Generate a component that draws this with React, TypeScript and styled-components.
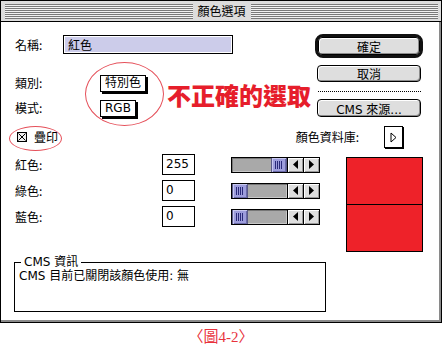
import React from "react";
import styled, { createGlobalStyle } from "styled-components";

const GlobalStyle = createGlobalStyle`
  html, body { margin: 0; padding: 0; background: #fff; }
  body {
    font-family: "DejaVu Sans", "Noto Sans CJK TC", sans-serif;
    font-size: 12px;
    color: #000;
  }
  * { box-sizing: border-box; }
`;

const Page = styled.div`
  width: 443px;
  display: flex;
  flex-direction: column;
`;

const Window = styled.div`
  position: relative;
  width: 442px;
  height: 323px;
  border: 1px solid #000;
  background: #fff;
  box-shadow: inset -2px -2px 0 #8a8a8a;
  display: flex;
  flex-direction: column;
`;

const TitleBar = styled.div`
  height: 21px;
  padding: 3px 3px 2px 4px;
  background: #dcdcdc;
  border-bottom: 1px solid #000;
  display: flex;
  align-items: stretch;
`;

const Stripes = styled.div`
  flex: 1;
  background: repeating-linear-gradient(
    to bottom,
    #7a7a7a 0px,
    #7a7a7a 1px,
    #f2f2f2 1px,
    #f2f2f2 2px
  );
`;

const TitleText = styled.div`
  padding: 0 5px;
  line-height: 14px;
  font-family: "Noto Sans CJK TC", sans-serif;
  font-size: 12px;
  background: #dcdcdc;
`;

const Body = styled.div`
  flex: 1;
  padding: 12px 0 0 14px;
  display: flex;
  flex-direction: column;
`;

const TopSection = styled.div`
  display: flex;
  align-items: flex-start;
`;

const LeftCol = styled.div`
  width: 300px;
  padding-top: 1px;
  display: flex;
  flex-direction: column;
`;

const RightCol = styled.div`
  width: 108px;
  display: flex;
  flex-direction: column;
  align-items: flex-start;
`;

const NameRow = styled.div`
  display: flex;
  align-items: center;
  height: 19px;
`;

const Label = styled.span<{ $w?: number }>`
  width: ${(p) => (p.$w ? `${p.$w}px` : "auto")};
  font-family: "Noto Sans CJK TC", sans-serif;
  font-size: 12px;
  line-height: 14px;
  white-space: nowrap;
`;

const NameInput = styled.div`
  width: 170px;
  height: 19px;
  border: 1px solid #000;
  box-shadow: inset 0 0 0 1px #fff;
  background: #ccccea;
  padding-left: 4px;
  font-family: "Noto Sans CJK TC", sans-serif;
  line-height: 17px;
`;

const ClassGrid = styled.div`
  margin-top: 20px;
  display: grid;
  grid-template-columns: 85px 67px auto;
  grid-template-rows: 18px 18px;
  row-gap: 7px;
  align-items: center;
`;

const PopButton = styled.div`
  justify-self: start;
  height: 17px;
  padding: 0 4px;
  border: 1px solid #000;
  background: #fff;
  box-shadow: 2px 2px 0 #000;
  line-height: 15px;
  font-family: "DejaVu Sans", "Noto Sans CJK TC", sans-serif;
  font-size: 12px;
`;

const Warning = styled.div`
  grid-column: 3;
  grid-row: 1 / span 2;
  align-self: center;
  margin-top: -2px;
  color: #e61e2b;
  font-family: "Noto Sans CJK TC", serif;
  font-weight: 900;
  font-size: 24px;
  line-height: 28px;
  white-space: nowrap;
`;

const DefaultRing = styled.div`
  width: 108px;
  height: 24px;
  border: 3px solid #111;
  border-radius: 8px;
  display: flex;
`;

const MacButton = styled.div<{ $h?: number; $w?: number }>`
  width: ${(p) => (p.$w ? `${p.$w}px` : "104px")};
  height: ${(p) => (p.$h ? `${p.$h}px` : "18px")};
  margin-left: ${(p) => (p.$w ? "0" : "2px")};
  border: 1px solid #000;
  border-radius: 4px;
  background: #dedede;
  box-shadow: inset 1px 1px 0 #fff, inset -1px -1px 0 #8c8c8c;
  display: flex;
  align-items: center;
  justify-content: center;
  font-family: "DejaVu Sans", "Noto Sans CJK TC", sans-serif;
  font-size: 12px;
`;

const Spaced = styled.div<{ $mt: number }>`
  margin-top: ${(p) => p.$mt}px;
`;

const DottedRule = styled.div`
  margin-top: 9px;
  margin-left: 3px;
  width: 103px;
  border-top: 1px dotted #000;
`;

const OptionsRow = styled.div`
  margin-top: 9px;
  width: 388px;
  height: 22px;
  display: flex;
  align-items: center;
  justify-content: space-between;
`;

const CheckWrap = styled.div`
  display: flex;
  align-items: center;
  gap: 7px;
  margin-left: 2px;
`;

const LibraryWrap = styled.div`
  display: flex;
  align-items: center;
  gap: 25px;
`;

const LibraryButton = styled.div`
  width: 19px;
  height: 22px;
  border: 1px solid #000;
  box-shadow: 1px 1px 0 #000;
  background: #fff;
  display: flex;
  align-items: center;
  justify-content: center;
`;

const RowsSection = styled.div`
  margin-top: 6px;
  display: flex;
  align-items: flex-start;
`;

const RowsGrid = styled.div`
  display: grid;
  grid-template-columns: 147px 69px 89px;
  grid-auto-rows: 21px;
  row-gap: 5px;
  align-items: center;
`;

const NumBox = styled.div`
  width: 33px;
  height: 21px;
  border: 1px solid #000;
  padding-left: 3px;
  line-height: 19px;
  font-size: 12px;
`;

const SliderBox = styled.div`
  width: 89px;
  height: 16px;
  border: 1px solid #000;
  display: flex;
`;

const Track = styled.div`
  flex: 1;
  position: relative;
  background: #a9a9a9;
  box-shadow: inset 1px 1px 0 #777, inset -1px -1px 0 #c8c8c8;
  display: flex;
`;

const Thumb = styled.div`
  width: 16px;
  height: 14px;
  background: #9d9ddc;
  border-left: 1px solid #5a5a8a;
  border-right: 1px solid #5a5a8a;
  box-shadow: inset 1px 1px 0 #c8c8f0, inset -1px -1px 0 #6a6aa8;
  display: flex;
  align-items: center;
  justify-content: center;
`;

const Grip = styled.div`
  width: 8px;
  height: 8px;
  background: repeating-linear-gradient(
    to right,
    #2a2a7a 0px,
    #2a2a7a 1px,
    transparent 1px,
    transparent 2px
  );
`;

const ArrowBtn = styled.div`
  width: 16px;
  height: 14px;
  border-left: 1px solid #000;
  background: #dedede;
  box-shadow: inset 1px 1px 0 #fff, inset -1px -1px 0 #999;
  display: flex;
  align-items: center;
  justify-content: center;
`;

const Swatch = styled.div`
  margin-left: 26px;
  margin-top: 3px;
  width: 77px;
  height: 95px;
  border: 1px solid #000;
  display: flex;
  flex-direction: column;
`;

const SwatchHalf = styled.div<{ $c: string }>`
  flex: 1;
  background: ${(p) => p.$c};
  & + & {
    border-top: 1px solid #000;
  }
`;

const GroupBox = styled.div`
  position: relative;
  margin-top: 10px;
  margin-left: -1px;
  width: 312px;
  height: 50px;
  border: 1px solid #000;
  padding: 6px 4px 3px;
  font-size: 12px;
  line-height: 14px;
`;

const Legend = styled.span`
  position: absolute;
  top: -8px;
  left: 6px;
  padding: 0 3px;
  background: #fff;
  line-height: 14px;
`;

const Ellipse = styled.div<{ $x: number; $y: number; $w: number; $h: number }>`
  position: absolute;
  left: ${(p) => p.$x}px;
  top: ${(p) => p.$y}px;
  width: ${(p) => p.$w}px;
  height: ${(p) => p.$h}px;
  border: 1px solid #e5505a;
  border-radius: 50%;
  pointer-events: none;
`;

const Caption = styled.div`
  width: 442px;
  margin-top: 6px;
  text-align: center;
  color: #e8323c;
  font-family: "Liberation Serif", "Noto Sans CJK TC", serif;
  font-size: 15px;
  line-height: 16px;
`;

const CheckIcon = () => (
  <svg width="10" height="10" viewBox="0 0 10 10">
    <rect x="0.5" y="0.5" width="9" height="9" fill="#eee" stroke="#000" />
    <path d="M1.5 1.5 L8.5 8.5 M8.5 1.5 L1.5 8.5" stroke="#000" strokeWidth="1" />
  </svg>
);

const TriangleRight = ({ outline }: { outline?: boolean }) => (
  <svg width="7" height="11" viewBox="0 0 7 11">
    <path
      d="M1 1 L6 5.5 L1 10 Z"
      fill={outline ? "#fff" : "#000"}
      stroke="#000"
      strokeWidth="1"
    />
  </svg>
);

const TriangleLeft = () => (
  <svg width="5" height="9" viewBox="0 0 5 9">
    <path d="M5 0 L0 4.5 L5 9 Z" fill="#000" />
  </svg>
);

const TriangleR = () => (
  <svg width="5" height="9" viewBox="0 0 5 9">
    <path d="M0 0 L5 4.5 L0 9 Z" fill="#000" />
  </svg>
);

const Slider = ({ value }: { value: number }) => {
  const travel = 55 - 16;
  const left = Math.round((value / 255) * travel);
  return (
    <SliderBox>
      <Track>
        <div style={{ width: left }} />
        <Thumb>
          <Grip />
        </Thumb>
      </Track>
      <ArrowBtn>
        <TriangleLeft />
      </ArrowBtn>
      <ArrowBtn>
        <TriangleR />
      </ArrowBtn>
    </SliderBox>
  );
};

const channels = [
  { label: "紅色:", value: 255 },
  { label: "綠色:", value: 0 },
  { label: "藍色:", value: 0 },
];

export default function App() {
  return (
    <Page>
      <GlobalStyle />
      <Window>
        <TitleBar>
          <Stripes />
          <TitleText>顏色選項</TitleText>
          <Stripes />
        </TitleBar>
        <Body>
          <TopSection>
            <LeftCol>
              <NameRow>
                <Label $w={48}>名稱:</Label>
                <NameInput>紅色</NameInput>
              </NameRow>
              <ClassGrid>
                <Label>類別:</Label>
                <PopButton>特別色</PopButton>
                <Warning>不正確的選取</Warning>
                <Label>模式:</Label>
                <PopButton>RGB</PopButton>
              </ClassGrid>
            </LeftCol>
            <RightCol>
              <DefaultRing>
                <MacButton $w={102} $h={18}>確定</MacButton>
              </DefaultRing>
              <Spaced $mt={7}>
                <MacButton $h={17}>取消</MacButton>
              </Spaced>
              <DottedRule />
              <Spaced $mt={7}>
                <MacButton $h={18}>CMS 來源...</MacButton>
              </Spaced>
            </RightCol>
          </TopSection>

          <OptionsRow>
            <CheckWrap>
              <CheckIcon />
              <Label>疊印</Label>
            </CheckWrap>
            <LibraryWrap>
              <Label>顏色資料庫:</Label>
              <LibraryButton>
                <TriangleRight outline />
              </LibraryButton>
            </LibraryWrap>
          </OptionsRow>

          <RowsSection>
            <RowsGrid>
              {channels.map((c) => (
                <React.Fragment key={c.label}>
                  <Label>{c.label}</Label>
                  <NumBox>{c.value}</NumBox>
                  <Slider value={c.value} />
                </React.Fragment>
              ))}
            </RowsGrid>
            <Swatch>
              <SwatchHalf $c="#ee2229" />
              <SwatchHalf $c="#ee2229" />
            </Swatch>
          </RowsSection>

          <GroupBox>
            <Legend>CMS 資訊</Legend>
            CMS 目前已關閉該顏色使用: 無
          </GroupBox>
        </Body>
        <Ellipse $x={84} $y={61} $w={79} $h={64} />
        <Ellipse $x={8} $y={125} $w={53} $h={25} />
      </Window>
      <Caption>〈圖4-2〉</Caption>
    </Page>
  );
}
